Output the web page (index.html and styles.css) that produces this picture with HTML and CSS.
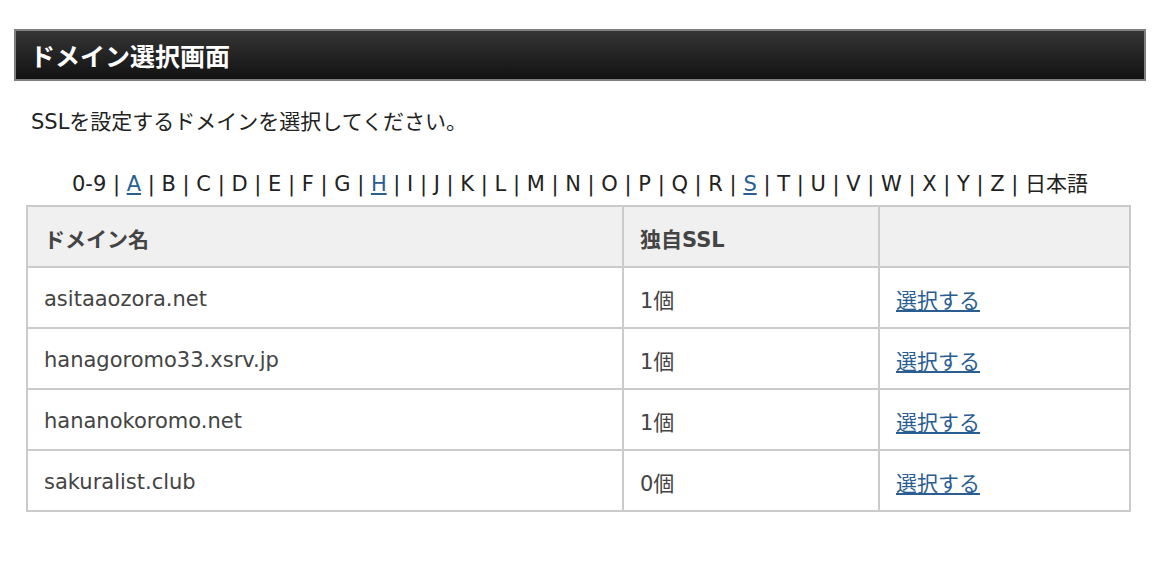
FILE: index.html
```html
<!DOCTYPE html>
<html lang="ja">
<head>
<meta charset="utf-8">
<link rel="stylesheet" href="styles.css">
</head>
<body>
<div class="page">
  <h1 class="title">ドメイン選択画面</h1>
  <p class="lead">SSLを設定するドメインを選択してください。</p>
  <div class="index">0-9 | <a href="#">A</a> | B | C | D | E | F | G | <a href="#">H</a> | I | J | K | L | M | N | O | P | Q | R | <a href="#">S</a> | T | U | V | W | X | Y | Z | 日本語</div>
  <table class="domains">
    <thead>
      <tr><th class="c1">ドメイン名</th><th class="c2">独自SSL</th><th class="c3"></th></tr>
    </thead>
    <tbody>
      <tr><td>asitaaozora.net</td><td>1個</td><td><a href="#">選択する</a></td></tr>
      <tr><td>hanagoromo33.xsrv.jp</td><td>1個</td><td><a href="#">選択する</a></td></tr>
      <tr><td>hananokoromo.net</td><td>1個</td><td><a href="#">選択する</a></td></tr>
      <tr><td>sakuralist.club</td><td>0個</td><td><a href="#">選択する</a></td></tr>
    </tbody>
  </table>
</div>
</body>
</html>
```

FILE: styles.css
```css
html, body { margin: 0; padding: 0; background: #fff; }
body {
  font-family: "DejaVu Sans", "Noto Sans CJK JP", sans-serif;
  color: #222;
}
.page {
  padding: 29px 20px 0 14px;
}
.title {
  margin: 0;
  height: 48px;
  border: 2px solid #7f7f7f;
  background: linear-gradient(#353535, #121212);
  color: #fff;
  font-size: 25px;
  font-weight: bold;
  line-height: 48px;
  padding-left: 14px;
  font-family: "Noto Sans CJK JP", sans-serif;
}
.lead {
  margin: 28px 0 0 17px;
  font-size: 21px;
  line-height: 26px;
}
.index {
  margin-top: 35px;
  text-align: center;
  font-size: 21px;
  line-height: 28px;
  width: 1132px;
}
.index a, .domains a { color: #2a5d91; text-decoration: underline; }
.domains {
  margin: 7px 0 0 12px;
  width: 1105px;
  border-collapse: collapse;
  border: 2px solid #cbcbcb;
  font-size: 21px;
  color: #444;
}
.domains th, .domains td {
  border: 2px solid #cbcbcb;
  height: 57px;
  padding: 2px 0 0 16px;
  text-align: left;
  vertical-align: middle;
}
.domains th { background: #f0f0f0; font-weight: bold; }
.c1 { width: 578px; }
.c2 { width: 238px; }
```
